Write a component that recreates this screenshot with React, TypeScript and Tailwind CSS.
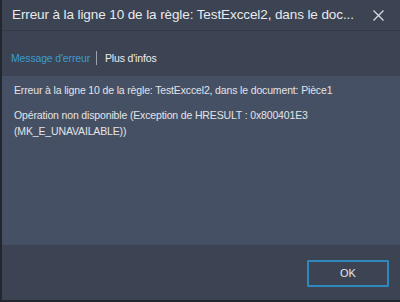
import React, { useState } from "react";

const App: React.FC = () => {
  const [tab, setTab] = useState("message");

  return (
    <div className="w-[400px] h-[302px] flex flex-col bg-[#3c4353] border-l-2 border-b-2 border-[#22262f] overflow-hidden font-['Liberation_Sans',sans-serif]">
      <div className="h-[31px] shrink-0 flex items-center justify-between pl-[10px] pr-[16px] border-b border-[#333947]">
        <span className="text-[13.5px] tracking-[-0.1px] text-[#e8eaee] whitespace-nowrap">
          Erreur à la ligne 10 de la règle: TestExccel2, dans le doc...
        </span>
        <svg width="11" height="11" viewBox="0 0 11 11" className="text-[#d8dbe0]">
          <path d="M0.5 0.5L10.5 10.5M10.5 0.5L0.5 10.5" stroke="currentColor" strokeWidth="1.3" />
        </svg>
      </div>

      <div className="h-[45px] shrink-0 flex items-end pb-[11px] pl-[9px] text-[10.5px] tracking-[-0.15px] leading-[14px]">
        <button
          onClick={() => setTab("message")}
          className={tab === "message" ? "text-[#3b9bd3]" : "text-[#eceef1]"}
        >
          Message d'erreur
        </button>
        <span className="ml-[6px] mr-[8px] w-px h-[14px] bg-[#9ca2ac]" />
        <button
          onClick={() => setTab("infos")}
          className={tab === "infos" ? "text-[#3b9bd3]" : "text-[#eceef1]"}
        >
          Plus d'infos
        </button>
      </div>

      <div className="h-[169px] shrink-0 bg-[#465064] pl-[12px] pr-[12px] pt-[6px] text-[10.5px] tracking-[-0.15px] leading-[16px] text-[#e2e4e8]">
        {tab === "message" ? (
          <>
            <p>Erreur à la ligne 10 de la règle: TestExccel2, dans le document: Pièce1</p>
            <p className="mt-[9px]">
              Opération non disponible (Exception de HRESULT : 0x800401E3
              <br />
              (MK_E_UNAVAILABLE))
            </p>
          </>
        ) : (
          <p>Aucune information supplémentaire.</p>
        )}
      </div>

      <div className="flex-1 flex items-start justify-end pt-[15px] pr-[11px]">
        <button className="w-[82px] h-[27px] border-2 border-[#2f88bb] rounded-[1px] text-[11px] text-[#e6e8ec]">
          OK
        </button>
      </div>
    </div>
  );
};

export default App;
